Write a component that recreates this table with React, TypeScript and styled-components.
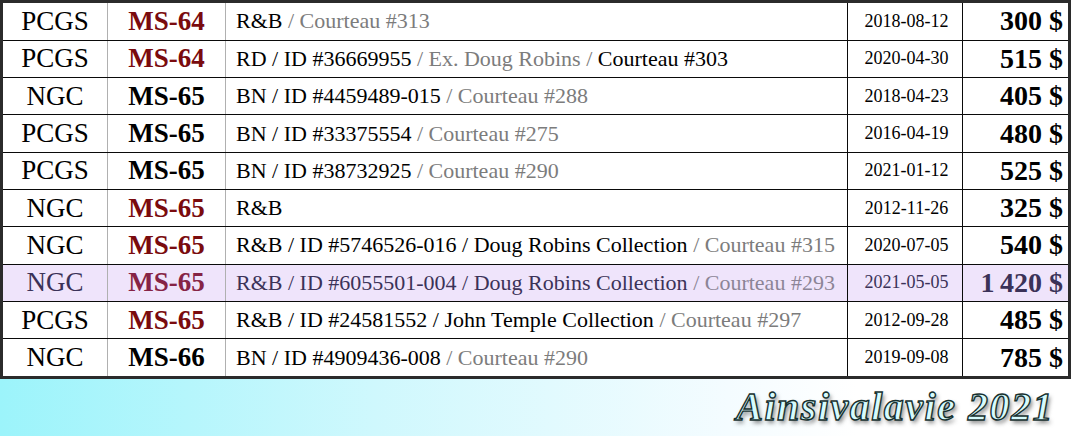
import styled, { createGlobalStyle } from 'styled-components';

const GlobalStyle = createGlobalStyle`
  html, body {
    margin: 0;
    padding: 0;
    background: #ffffff;
  }
  body {
    font-family: "Liberation Serif", "Times New Roman", serif;
  }
`;

const Page = styled.div`
  width: 1071px;
  height: 436px;
  display: flex;
  flex-direction: column;
  overflow: hidden;
`;

const Frame = styled.div`
  border: 3px solid #2b2b2b;
  background: #ffffff;
`;

const Table = styled.table`
  width: 100%;
  table-layout: fixed;
  border-collapse: collapse;
  border-style: hidden;
  font-family: "Liberation Serif", "Times New Roman", serif;
`;

const Row = styled.tr<{ $hl?: boolean }>`
  height: 37.3px;
  background: ${({ $hl }) => ($hl ? '#efe4fb' : '#ffffff')};
  color: ${({ $hl }) => ($hl ? '#3b3258' : '#000000')};
`;

const Cell = styled.td`
  padding: 0;
  border-top: 1px solid #0a0a0a;
  border-bottom: 1px solid #0a0a0a;
  vertical-align: middle;
  white-space: nowrap;
  overflow: hidden;
  font-family: "Liberation Serif", "Times New Roman", serif;
`;

const Service = styled(Cell)`
  width: 104px;
  text-align: center;
  font-size: 27px;
  border-right: 1px solid #b0b0b0;
`;

const Grade = styled(Cell)<{ $red?: boolean; $hl?: boolean }>`
  width: 117px;
  text-align: center;
  font-size: 27px;
  font-weight: bold;
  border-right: 1px solid #b0b0b0;
  color: ${({ $red, $hl }) => ($red ? ($hl ? '#862345' : '#7a0b0e') : 'inherit')};
`;

const Desc = styled(Cell)`
  width: 611px;
  padding-left: 10px;
  font-size: 22px;
  border-right: 1px solid #0a0a0a;
`;

const Muted = styled.span<{ $hl?: boolean }>`
  color: ${({ $hl }) => ($hl ? '#8c8496' : '#7c7c7c')};
`;

const DateCell = styled(Cell)`
  width: 111px;
  text-align: center;
  font-size: 18px;
  padding-left: 3px;
  border-right: 1px solid #0a0a0a;
`;

const Price = styled(Cell)`
  text-align: right;
  padding-right: 5px;
  font-size: 28px;
  font-weight: bold;
`;

const Footer = styled.div`
  flex: 1;
  display: flex;
  align-items: center;
  justify-content: flex-end;
  padding-right: 17px;
  background: linear-gradient(to right, #9cf4fb 0%, #cff8fd 35%, #f4fcff 68%, #ffffff 80%);
`;

const Signature = styled.div`
  font-family: "Liberation Serif", "Times New Roman", serif;
  font-style: italic;
  font-weight: bold;
  font-size: 40px;
  letter-spacing: 1.5px;
  line-height: 1;
  color: #d6fbfd;
  -webkit-text-stroke: 1.4px #16302f;
  text-shadow: 2px 3px 4px rgba(50, 50, 50, 0.6);
`;

type Seg = [string, boolean];

type Coin = {
  service: string;
  grade: string;
  red: boolean;
  desc: Seg[];
  date: string;
  price: string;
  hl?: boolean;
};

const coins: Coin[] = [
  { service: 'PCGS', grade: 'MS-64', red: true, desc: [['R&B', false], [' / Courteau #313', true]], date: '2018-08-12', price: '300 $' },
  {
    service: 'PCGS', grade: 'MS-64', red: true,
    desc: [['RD / ID #36669955', false], [' / Ex. Doug Robins / ', true], ['Courteau #303', false]],
    date: '2020-04-30', price: '515 $',
  },
  { service: 'NGC', grade: 'MS-65', red: false, desc: [['BN / ID #4459489-015', false], [' / Courteau #288', true]], date: '2018-04-23', price: '405 $' },
  { service: 'PCGS', grade: 'MS-65', red: false, desc: [['BN / ID #33375554', false], [' / Courteau #275', true]], date: '2016-04-19', price: '480 $' },
  { service: 'PCGS', grade: 'MS-65', red: false, desc: [['BN / ID #38732925', false], [' / Courteau #290', true]], date: '2021-01-12', price: '525 $' },
  { service: 'NGC', grade: 'MS-65', red: true, desc: [['R&B', false]], date: '2012-11-26', price: '325 $' },
  {
    service: 'NGC', grade: 'MS-65', red: true,
    desc: [['R&B / ID #5746526-016 / Doug Robins Collection', false], [' / Courteau #315', true]],
    date: '2020-07-05', price: '540 $',
  },
  {
    service: 'NGC', grade: 'MS-65', red: true, hl: true,
    desc: [['R&B / ID #6055501-004 / Doug Robins Collection', false], [' / Courteau #293', true]],
    date: '2021-05-05', price: '1\u2009420 $',
  },
  {
    service: 'PCGS', grade: 'MS-65', red: true,
    desc: [['R&B / ID #24581552 / John Temple Collection', false], [' / Courteau #297', true]],
    date: '2012-09-28', price: '485 $',
  },
  { service: 'NGC', grade: 'MS-66', red: false, desc: [['BN / ID #4909436-008', false], [' / Courteau #290', true]], date: '2019-09-08', price: '785 $' },
];

const App = () => {
  return (
    <Page>
      <GlobalStyle />
      <Frame>
        <Table>
          <tbody>
            {coins.map((c, i) => (
              <Row key={i} $hl={c.hl}>
                <Service>{c.service}</Service>
                <Grade $red={c.red} $hl={c.hl}>{c.grade}</Grade>
                <Desc>
                  {c.desc.map(([text, muted], j) =>
                    muted ? <Muted key={j} $hl={c.hl}>{text}</Muted> : <span key={j}>{text}</span>
                  )}
                </Desc>
                <DateCell>{c.date}</DateCell>
                <Price>{c.price}</Price>
              </Row>
            ))}
          </tbody>
        </Table>
      </Frame>
      <Footer>
        <Signature>Ainsivalavie 2021</Signature>
      </Footer>
    </Page>
  );
};

export default App;
